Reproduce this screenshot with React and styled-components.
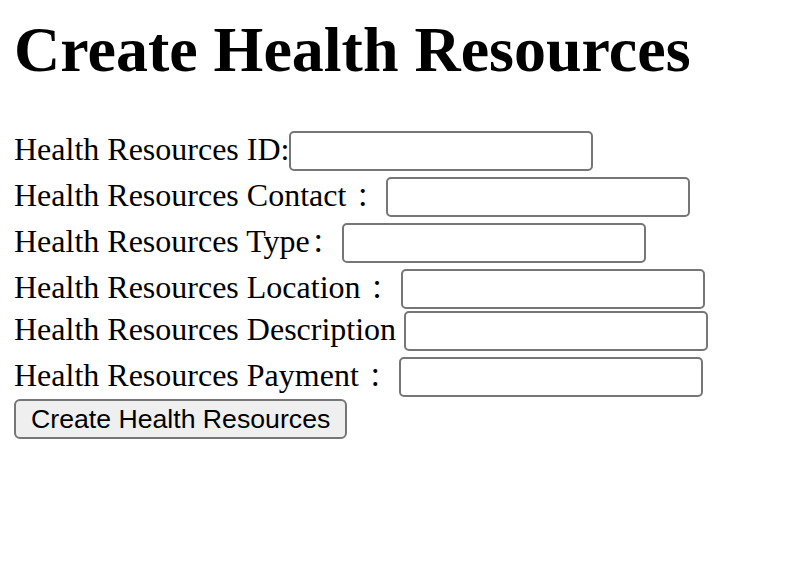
import React from "react";
import styled, { createGlobalStyle } from "styled-components";

const GlobalStyle = createGlobalStyle`
  html, body {
    margin: 0;
    padding: 0;
    background: #ffffff;
    color: #000000;
    font-family: "Liberation Serif", "Noto Sans CJK SC", serif;
  }
`;

const Page = styled.div`
  padding: 13px 14px 0 14px;
`;

const Title = styled.h1`
  margin: 0;
  font-family: "Liberation Serif", serif;
  font-weight: 700;
  font-size: 64px;
  line-height: 74px;
  white-space: nowrap;
`;

const Form = styled.form`
  display: flex;
  flex-direction: column;
  align-items: flex-start;
  margin-top: 44px;
`;

const Row = styled.div`
  display: flex;
  align-items: baseline;
  height: 40px;
  margin-top: ${(p) => (p.$fullColon ? "6px" : "2px")};
  &:first-child {
    margin-top: 0;
  }
`;

const Label = styled.label`
  font-family: "Liberation Serif", "Noto Sans CJK SC", serif;
  font-size: 32px;
  line-height: 28px;
  white-space: pre;
`;

const Colon = styled.span`
  display: inline-block;
  box-sizing: border-box;
  width: 32px;
  padding-left: 2px;
  font-family: "Noto Sans CJK SC", sans-serif;
  font-size: 26px;
  line-height: 26px;
  vertical-align: 0;
  text-align: left;
`;

const Input = styled.input`
  box-sizing: border-box;
  width: 304px;
  height: 40px;
  margin: 0;
  padding: 2px 4px;
  border: 2px solid #767676;
  border-radius: 5px;
  background: #ffffff;
  font-family: "Liberation Sans", Arial, sans-serif;
  font-size: 26.67px;
  outline: none;
`;

const Button = styled.button`
  box-sizing: border-box;
  height: 40px;
  margin: 2px 0 0 0;
  padding: 0 15px;
  border: 2px solid #767676;
  border-radius: 6px;
  background: #efefef;
  color: #000000;
  font-family: "Liberation Sans", Arial, sans-serif;
  font-size: 26.67px;
  line-height: 1;
  white-space: nowrap;
`;

const fields = [
  { id: "id", text: "Health Resources ID:", colon: "", full: false },
  { id: "contact", text: "Health Resources Contact ", colon: "：", full: true },
  { id: "type", text: "Health Resources Type", colon: "：", full: true },
  { id: "location", text: "Health Resources Location ", colon: "：", full: true },
  { id: "description", text: "Health Resources Description ", colon: "", full: false },
  { id: "payment", text: "Health Resources Payment ", colon: "：", full: true },
];

export default function App() {
  return (
    <>
      <GlobalStyle />
      <Page>
        <Title>Create Health Resources</Title>
        <Form onSubmit={(e) => e.preventDefault()}>
          {fields.map((f) => (
            <Row key={f.id} $fullColon={f.full}>
              <Label htmlFor={f.id}>
                {f.text}
                {f.colon && <Colon>{f.colon}</Colon>}
              </Label>
              <Input id={f.id} type="text" />
            </Row>
          ))}
          <Button type="submit">Create Health Resources</Button>
        </Form>
      </Page>
    </>
  );
}
